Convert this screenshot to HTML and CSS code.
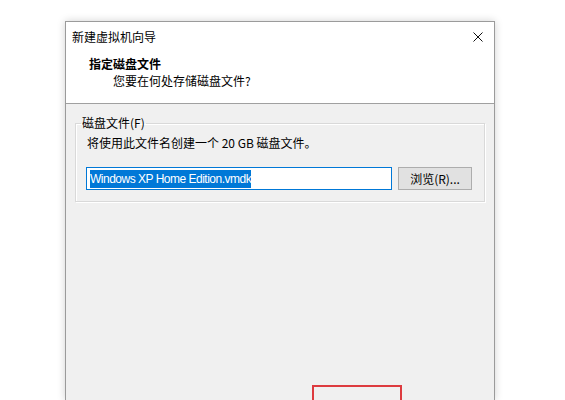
FILE: index.html
```html
<!DOCTYPE html>
<html lang="zh-CN">
<head>
    <meta charset="UTF-8">
    <title>新建虚拟机向导</title>
    <link rel="stylesheet" href="styles.css">
</head>
<body>
    <div class="page">
        <div class="dialog">
            <div class="top">
                <div class="titlebar">
                    <span class="title">新建虚拟机向导</span>
                    <svg class="close" width="10" height="10" viewBox="0 0 10 10">
                        <path d="M0.5 0.5 L9.5 9.5 M9.5 0.5 L0.5 9.5" stroke="#111" stroke-width="1" fill="none"/>
                    </svg>
                </div>
                <div class="header">
                    <h2>指定磁盘文件</h2>
                    <p>您要在何处存储磁盘文件?</p>
                </div>
            </div>
            <div class="content">
                <fieldset class="group">
                    <legend>磁盘文件(F)</legend>
                    <p class="hint">将使用此文件名创建一个 20 GB 磁盘文件。</p>
                    <div class="file-row">
                        <div class="file-input"><span class="selected">Windows XP Home Edition.vmdk</span></div>
                        <button class="browse">浏览(R)...</button>
                    </div>
                </fieldset>
            </div>
            <!-- red annotation box -->
            <div class="mark"></div>
        </div>
    </div>
</body>
</html>
```

FILE: styles.css
```css
* {
    margin: 0;
    padding: 0;
    box-sizing: border-box;
}

html, body {
    height: 100%;
    overflow: hidden;
}

body {
    background: #fff;
    font-family: "Noto Sans CJK SC", "Liberation Sans", sans-serif;
    font-size: 12px;
    color: #000;
}

.page {
    padding: 21px 0 0 65px;
}

/* Dialog */
.dialog {
    position: relative;
    width: 430px;
    height: 379px;
    background: #f0f0f0;
    border: 1px solid #9b9b9b;
    border-bottom: none;
    box-shadow: 0 0 8px rgba(0,0,0,0.18);
}

.top {
    background: #fff;
    height: 82px;
    border-bottom: 1px solid #a0a0a0;
}

.titlebar {
    height: 29px;
    display: flex;
    align-items: center;
    justify-content: space-between;
    padding: 0 11px 0 6px;
    line-height: 16px;
}

.close {
    display: block;
}

.header {
    padding: 5px 0 0 23px;
}

.header h2 {
    font-size: 12px;
    font-weight: bold;
    line-height: 16px;
}

.header p {
    line-height: 16px;
    margin-top: 1px;
    padding-left: 24px;
}

/* Group box */
.content {
    padding: 11px 9px 0;
}

.group {
    border: 1px solid #d9d9d9;
    box-shadow: inset 1px 1px 0 #fff, 1px 1px 0 #fff;
    padding: 0 11px 11px;
}

.group legend {
    margin-left: -6px;
    padding: 0 1px;
    line-height: 16px;
}

.hint {
    line-height: 16px;
    margin-top: 4px;
}

.file-row {
    display: flex;
    gap: 6px;
    margin: 16px 0 0 -1px;
}

.file-input {
    width: 306px;
    height: 23px;
    background: #fff;
    border: 1px solid #0078d7;
    padding: 1px 3px;
    display: flex;
    align-items: center;
}

.selected {
    background: #0078d7;
    color: #fff;
    font-family: "Liberation Sans", sans-serif;
    font-size: 12px;
    letter-spacing: -0.5px;
    line-height: 18px;
}

.browse {
    width: 74px;
    height: 23px;
    background: #e1e1e1;
    border: 1px solid #adadad;
    font-family: "Noto Sans CJK SC", "Liberation Sans", sans-serif;
    font-size: 12px;
    color: #000;
}

/* Annotation */
.mark {
    position: absolute;
    left: 246px;
    top: 363px;
    width: 90px;
    height: 16px;
    border: 2px solid #dd3b3f;
    border-bottom: none;
}
```
